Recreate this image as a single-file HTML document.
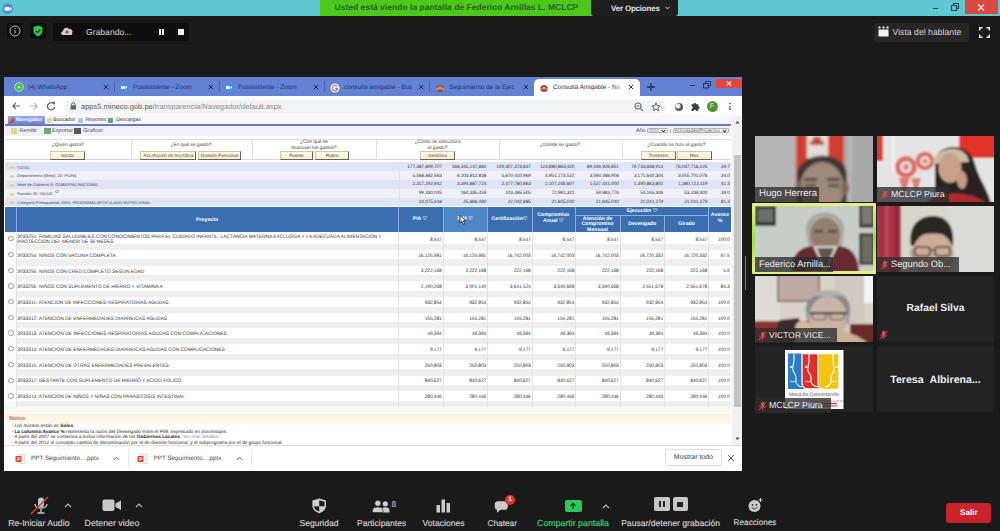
<!DOCTYPE html><html><head><meta charset="utf-8"><title>Zoom</title><style>
*{margin:0;padding:0;box-sizing:border-box}
html,body{text-rendering:geometricPrecision;width:1000px;height:531px;overflow:hidden;background:#1a1a1a;font-family:"Liberation Sans",sans-serif}
div,span{position:absolute}
.t{white-space:nowrap}
.tb{color:#cdcdcd;font-size:8.7px;white-space:nowrap;text-align:center;width:120px;margin-left:-60px}
.tile{background:#232323;overflow:hidden}
.nm{left:0;bottom:0;height:13px;background:rgba(38,38,38,.8);color:#f2f2f2;font-size:9.7px;line-height:13px;white-space:nowrap}
.q{color:#3a3a3a;font-size:4.9px;text-align:center;white-space:nowrap;line-height:6px}
.btn{background:linear-gradient(#fff8e4,#fbefd0);border:0.9px solid #cfc6ae;border-right-color:#6a6258;border-bottom-color:#6a6258;color:#444;font-size:4.65px;line-height:7.4px;text-align:center;white-space:nowrap}
.fr{left:5px;width:726px;height:8.6px}
.ft{color:#333;font-size:4.8px;line-height:8.6px;white-space:nowrap}
.num{color:#333;font-size:4.9px;white-space:nowrap;text-align:right;letter-spacing:-0.1px}
.hd{color:#fff;font-size:5.2px;font-weight:bold;text-align:center;white-space:nowrap;line-height:5.6px}
.pt{color:#333;font-size:4.9px;white-space:nowrap;line-height:5.7px}
.tab{color:#26346c;font-size:6.4px;white-space:nowrap;line-height:8px}
</style></head><body>
<div style="left:0;top:0;width:1000px;height:16px;background:#5ec7cf"></div>
<svg style="position:absolute;left:1.5px;top:2.5px" width="12" height="12"><circle cx="5.8" cy="5.8" r="5.4" fill="#4a8ee8"/><rect x="2.6" y="4" width="4.8" height="3.8" rx="0.8" fill="#fff"/><path d="M7.6 5.3L9.4 4.1V7.7L7.6 6.5Z" fill="#fff"/></svg>
<div style="left:320px;top:0;width:271px;height:16px;background:#4ec71c"></div>
<div class="t" style="left:334.5px;top:0.4px;height:16px;line-height:15px;font-size:8.55px;font-weight:bold;color:#1f641c">Usted está viendo la pantalla de Federico Arnillas L. MCLCP</div>
<div style="left:591px;top:0;width:87px;height:16px;background:#1f1f22;border-radius:0 0 3px 3px"></div>
<div class="t" style="left:611px;top:0.7px;line-height:15px;font-size:8px;font-weight:bold;color:#e2e2e2;letter-spacing:-0.2px">Ver Opciones</div>
<svg style="position:absolute;left:665px;top:6px" width="5" height="4"><path d="M0.5 0.8 L2.5 2.8 L4.5 0.8" stroke="#ddd" stroke-width="1" fill="none"/></svg>
<div style="left:933px;top:8px;width:5px;height:1.3px;background:#1c4a50"></div>
<svg style="position:absolute;left:950px;top:2px" width="10" height="10"><path d="M1.5 3.5h5v5h-5z M3.5 3.5v-2h5v5h-2" stroke="#1c4a50" stroke-width="1.1" fill="none"/></svg>
<div style="left:965px;top:0;width:32.5px;height:13.5px;background:#d9493e"></div>
<svg style="position:absolute;left:977px;top:3.5px" width="8" height="7"><path d="M1 0.5 L7 6.5 M7 0.5 L1 6.5" stroke="#fbe8e6" stroke-width="1.3"/></svg>
<div style="left:7px;top:23px;width:16px;height:16px;background:#0e0e0e;border-radius:2px"></div>
<svg style="position:absolute;left:9px;top:25px" width="12" height="12"><circle cx="6" cy="6" r="5" stroke="#bdbdbd" stroke-width="1" fill="none"/><rect x="5.5" y="5" width="1" height="3.6" fill="#bdbdbd"/><rect x="5.5" y="3.2" width="1" height="1" fill="#bdbdbd"/></svg>
<div style="left:30px;top:23px;width:16px;height:16px;background:#0e0e0e;border-radius:2px"></div>
<svg style="position:absolute;left:33px;top:25px" width="10" height="12"><path d="M5 0.5 L9.5 2 V6 C9.5 8.5 7.5 10.5 5 11.5 C2.5 10.5 0.5 8.5 0.5 6 V2 Z" fill="#33c24a"/><path d="M2.8 6 L4.4 7.6 L7.3 4.6" stroke="#0d3b17" stroke-width="1.2" fill="none"/></svg>
<div style="left:53px;top:22.5px;width:136px;height:18.5px;background:#0e0e0e;border-radius:2px"></div>
<svg style="position:absolute;left:60px;top:25px" width="14" height="12"><path d="M3 10 C0.5 10 0.5 6.5 3 6.3 C3 3 7 1.5 9 4 C11.5 3.5 13.5 6 12 8 C13 9.5 12 10 11 10 Z" fill="#d8c9cb"/><circle cx="7" cy="7" r="1.6" fill="#c43a3a"/></svg>
<div class="t" style="left:86px;top:25.5px;font-size:8.6px;line-height:12px;color:#d6d6d6">Grabando...</div>
<div style="left:158.5px;top:29px;width:2.2px;height:5.5px;background:#f0f0f0"></div>
<div style="left:162.3px;top:29px;width:2.2px;height:5.5px;background:#f0f0f0"></div>
<div style="left:178px;top:29px;width:6px;height:5.5px;background:#f0f0f0"></div>
<div style="left:874px;top:22.7px;width:95px;height:19px;background:#262626;border-radius:2px"></div>
<svg style="position:absolute;left:878px;top:26px" width="12" height="11"><rect x="0.5" y="3.5" width="10" height="7" fill="#f2f2f2"/><rect x="0.5" y="0.5" width="2" height="2" fill="#f2f2f2"/><rect x="4.5" y="0.5" width="2" height="2" fill="#f2f2f2"/><rect x="8.5" y="0.5" width="2" height="2" fill="#f2f2f2"/></svg>
<div class="t" style="left:892.5px;top:25.5px;font-size:8.7px;line-height:12px;color:#d8d8d8">Vista del hablante</div>
<svg style="position:absolute;left:979px;top:27px" width="11" height="11"><path d="M0.7 3.5V0.7H3.5 M7.5 0.7H10.3V3.5 M10.3 7.5V10.3H7.5 M3.5 10.3H0.7V7.5" stroke="#f0f0f0" stroke-width="1.4" fill="none"/></svg>
<div style="left:4px;top:77px;width:738px;height:394px;background:#fff;overflow:hidden"></div>
<div style="left:4px;top:77px;width:738px;height:19px;background:#6482d4"></div>
<svg style="position:absolute;left:14px;top:82px" width="10" height="10"><circle cx="5" cy="5" r="4.3" fill="#39c24c" stroke="#bfeac4" stroke-width="0.9"/><path d="M5 3.2L6.6 6.2H3.4Z" fill="#d8f5da"/></svg>
<div class="tab" style="left:28px;top:83.5px;width:69px;overflow:hidden">(4) WhatsApp</div>
<svg style="position:absolute;left:103px;top:83.5px" width="6" height="6"><path d="M0.8 0.8L5.2 5.2M5.2 0.8L0.8 5.2" stroke="#1f2b55" stroke-width="1"/></svg>
<div style="left:114px;top:81px;width:1px;height:11px;background:#4a5ea8"></div>
<svg style="position:absolute;left:119px;top:82.5px" width="10" height="9"><rect x="0.5" y="0.5" width="9" height="8" rx="2" fill="#4a8df0"/><rect x="2" y="3" width="4" height="3" rx="0.6" fill="#fff"/><path d="M6.3 4.5L8 3.2V5.8Z" fill="#fff"/></svg>
<div class="tab" style="left:133px;top:83.5px;width:69px;overflow:hidden">Posasistente - Zoom</div>
<svg style="position:absolute;left:208px;top:83.5px" width="6" height="6"><path d="M0.8 0.8L5.2 5.2M5.2 0.8L0.8 5.2" stroke="#1f2b55" stroke-width="1"/></svg>
<div style="left:219px;top:81px;width:1px;height:11px;background:#4a5ea8"></div>
<svg style="position:absolute;left:224px;top:82.5px" width="10" height="9"><rect x="0.5" y="0.5" width="9" height="8" rx="2" fill="#4a8df0"/><rect x="2" y="3" width="4" height="3" rx="0.6" fill="#fff"/><path d="M6.3 4.5L8 3.2V5.8Z" fill="#fff"/></svg>
<div class="tab" style="left:238px;top:83.5px;width:69px;overflow:hidden">Posasistente - Zoom</div>
<svg style="position:absolute;left:313px;top:83.5px" width="6" height="6"><path d="M0.8 0.8L5.2 5.2M5.2 0.8L0.8 5.2" stroke="#1f2b55" stroke-width="1"/></svg>
<div style="left:324px;top:81px;width:1px;height:11px;background:#4a5ea8"></div>
<svg style="position:absolute;left:330px;top:82.5px" width="10" height="10"><circle cx="5" cy="5" r="4.5" fill="#f6f6f6"/><path d="M7.3 3.6A2.7 2.7 0 1 0 7.6 5.4H5" stroke="#d9685a" stroke-width="1.1" fill="none"/><path d="M2.5 6.3A2.7 2.7 0 0 0 7.6 5.4" stroke="#5aa86a" stroke-width="1.1" fill="none"/></svg>
<div class="tab" style="left:344px;top:83.5px;width:68px;overflow:hidden">consulta amigable - Bus</div>
<svg style="position:absolute;left:418px;top:83.5px" width="6" height="6"><path d="M0.8 0.8L5.2 5.2M5.2 0.8L0.8 5.2" stroke="#1f2b55" stroke-width="1"/></svg>
<div style="left:429px;top:81px;width:1px;height:11px;background:#4a5ea8"></div>
<svg style="position:absolute;left:435px;top:82.5px" width="10" height="10"><path d="M1 6C1 3 3 2 5 2C7 2 9 3 9 6C9 8 7 9 5 9C3 9 1 8 1 6Z" fill="#a8483a"/><circle cx="5" cy="5" r="1.6" fill="#e0a080"/><path d="M1 6.5L3 5.8M9 6.5L7 5.8" stroke="#f0d0d0" stroke-width="1"/></svg>
<div class="tab" style="left:449px;top:83.5px;width:68px;overflow:hidden">Seguimiento de la Ejec</div>
<svg style="position:absolute;left:523px;top:83.5px" width="6" height="6"><path d="M0.8 0.8L5.2 5.2M5.2 0.8L0.8 5.2" stroke="#1f2b55" stroke-width="1"/></svg>
<div style="left:534px;top:78.5px;width:106px;height:18px;background:#fff;border-radius:5px 5px 0 0"></div>
<svg style="position:absolute;left:539px;top:82.5px" width="10" height="10"><path d="M1 6C1 3 3 2 5 2C7 2 9 3 9 6C9 8 7 9 5 9C3 9 1 8 1 6Z" fill="#a8483a"/><circle cx="5" cy="5" r="1.6" fill="#e0a080"/><path d="M1 6.5L3 5.8M9 6.5L7 5.8" stroke="#f0d0d0" stroke-width="1"/></svg>
<div class="tab" style="left:553px;top:83.5px;width:70px;overflow:hidden;color:#333">Consulta Amigable - Na</div>
<div style="left:613px;top:82px;width:12px;height:10px;background:linear-gradient(90deg,rgba(255,255,255,0),#fff)"></div>
<svg style="position:absolute;left:628px;top:83.5px" width="6" height="6"><path d="M0.8 0.8L5.2 5.2M5.2 0.8L0.8 5.2" stroke="#333" stroke-width="1"/></svg>
<svg style="position:absolute;left:646px;top:82px" width="10" height="10"><path d="M5 1V9M1 5H9" stroke="#1f2b55" stroke-width="1.3"/></svg>
<div style="left:689.5px;top:84.5px;width:5px;height:1.3px;background:#24336a"></div>
<svg style="position:absolute;left:702px;top:79.5px" width="10" height="9"><path d="M1.5 3.5h5v4.5h-5z M3.5 3.5v-2h5v4.5h-2" stroke="#24336a" stroke-width="1" fill="none"/></svg>
<div style="left:716px;top:78.5px;width:25.5px;height:9px;background:#e0473f"></div>
<svg style="position:absolute;left:725.5px;top:80.5px" width="6" height="5"><path d="M0.8 0.5L5.2 4.5M5.2 0.5L0.8 4.5" stroke="#fde" stroke-width="1.1"/></svg>
<svg style="position:absolute;left:11px;top:101px" width="10" height="10"><path d="M9 5H2 M5 1.8L1.8 5L5 8.2" stroke="#5f6368" stroke-width="1.2" fill="none"/></svg>
<svg style="position:absolute;left:28.5px;top:101px" width="10" height="10"><path d="M1 5H8 M5 1.8L8.2 5L5 8.2" stroke="#b7b9bc" stroke-width="1.2" fill="none"/></svg>
<svg style="position:absolute;left:46px;top:101px" width="10" height="10"><path d="M8 3.2 A3.6 3.6 0 1 0 8.6 6" stroke="#5f6368" stroke-width="1.3" fill="none"/><path d="M6 0.8 L9 0.8 L9 3.8 Z" fill="#5f6368"/></svg>
<div style="left:63.5px;top:100px;width:602px;height:13.5px;background:#f1f3f4;border-radius:7px"></div>
<svg style="position:absolute;left:69.5px;top:102px" width="7" height="8"><rect x="0.5" y="3.3" width="5.5" height="4.2" fill="#5f6368"/><path d="M1.6 3.5V2.3A1.7 1.7 0 0 1 5 2.3V3.5" stroke="#5f6368" stroke-width="1" fill="none"/></svg>
<div class="t" style="left:81px;top:101px;font-size:7.5px;line-height:11px;color:#5a5a5a">apps5.mineco.gob.pe<span style="position:static;color:#8a8d91">/transparencia/Navegador/default.aspx</span></div>
<svg style="position:absolute;left:634px;top:102px" width="10" height="10"><circle cx="4" cy="4" r="3" stroke="#6a6d71" stroke-width="1.1" fill="none"/><path d="M6.2 6.2L9 9 M2.5 4H5.5" stroke="#6a6d71" stroke-width="1.1"/></svg>
<svg style="position:absolute;left:651px;top:101.5px" width="10" height="10"><path d="M5 0.8L6.2 3.7L9.2 3.9L6.9 5.8L7.6 8.8L5 7.2L2.4 8.8L3.1 5.8L0.8 3.9L3.8 3.7Z" stroke="#5f6368" stroke-width="1" fill="none"/></svg>
<svg style="position:absolute;left:674px;top:101.5px" width="10" height="10"><circle cx="5" cy="5" r="4" fill="#555"/><circle cx="4" cy="4" r="2.6" fill="#e8e8e8"/></svg>
<svg style="position:absolute;left:690px;top:101px" width="11" height="11"><path d="M1.5 3.2H3.6A1.3 1.3 0 0 1 6.2 3.2H8.3V5.3A1.3 1.3 0 0 1 8.3 7.9V10H6.2A1.3 1.3 0 0 0 3.6 10H1.5V7.9A1.3 1.3 0 0 0 1.5 5.3Z" fill="#3c4043"/></svg>
<div style="left:706.5px;top:100.5px;width:11px;height:11px;border-radius:50%;background:#54962e"></div>
<div class="t" style="left:706.5px;top:100.5px;width:11px;text-align:center;font-size:7px;line-height:11px;color:#e8f5e0">F</div>
<div style="left:729.3px;top:102.8px;width:1.5px;height:1.5px;background:#5f6368;border-radius:50%"></div>
<div style="left:729.3px;top:105.5px;width:1.5px;height:1.5px;background:#5f6368;border-radius:50%"></div>
<div style="left:729.3px;top:108.2px;width:1.5px;height:1.5px;background:#5f6368;border-radius:50%"></div>
<div style="left:5px;top:115px;width:727px;height:9px;background:#f7f7fb"></div>
<div style="left:7.5px;top:116px;width:37px;height:8.5px;background:linear-gradient(#93a6e8,#6a80d2);border-radius:1px 1px 0 0"></div>
<div style="left:9px;top:117.5px;width:5px;height:5px;background:linear-gradient(135deg,#e8c040,#d04040 60%,#40a040)"></div>
<div class="t" style="left:16px;top:116px;font-size:5px;line-height:8px;color:#fff;font-weight:bold">Navegador</div>
<div style="left:46.5px;top:117.5px;width:5px;height:5.5px;background:#e6c96a;opacity:.8;border-radius:1px"></div>
<div class="t" style="left:53.2px;top:116.3px;font-size:5.2px;line-height:8px;color:#333">Buscador</div>
<div style="left:78px;top:117.5px;width:5px;height:5.5px;background:#a8b4d0;opacity:.8;border-radius:1px"></div>
<div class="t" style="left:85.5px;top:116.3px;font-size:5.2px;line-height:8px;color:#333">Reportes</div>
<div style="left:108.2px;top:117.5px;width:5px;height:5.5px;background:#3a8a6a;opacity:.8;border-radius:1px"></div>
<div class="t" style="left:116.2px;top:116.3px;font-size:5.2px;line-height:8px;color:#333">Descargas</div>
<div style="left:5px;top:124.4px;width:726px;height:2px;background:#6a78c6"></div>
<div style="left:5px;top:126.4px;width:726px;height:9.6px;background:#eef0fb"></div>
<div style="left:11.2px;top:128.3px;width:5.5px;height:5.5px;background:#e8cf6a;opacity:.85"></div>
<div class="t" style="left:19.5px;top:127.3px;font-size:5.6px;line-height:8px;color:#555">Remitir</div>
<div style="left:44.2px;top:128.3px;width:7px;height:5.5px;background:#5a9a5a;opacity:.85"></div>
<div class="t" style="left:52px;top:127.3px;font-size:5.6px;line-height:8px;color:#555">Exportar</div>
<div style="left:73.5px;top:128.3px;width:7px;height:5.5px;background:#4a3a2a;opacity:.85"></div>
<div class="t" style="left:83.2px;top:127.3px;font-size:5.6px;line-height:8px;color:#555">Graficar</div>
<div class="t" style="left:636px;top:126.8px;font-size:5.3px;line-height:8px;color:#444">Año</div>
<div style="left:646.8px;top:127.6px;width:21.2px;height:5.6px;background:#fff;border:0.6px solid #b4b4b4;border-radius:1px"></div>
<div class="t" style="left:648.5px;top:128px;font-size:4.6px;line-height:6px;color:#777">2020</div>
<svg style="position:absolute;left:660.5px;top:128.8px" width="5" height="4"><path d="M0.6 0.8L2.5 2.8L4.4 0.8" stroke="#333" stroke-width="1.1" fill="none"/></svg>
<div style="left:670.3px;top:128.5px;width:0.6px;height:4px;background:#bbb"></div>
<div style="left:672.5px;top:127.6px;width:56.8px;height:5.6px;background:#fff;border:0.6px solid #b4b4b4;border-radius:1px"></div>
<div class="t" style="left:674.5px;top:128px;font-size:4.6px;line-height:6px;color:#555">Actividades/Proyectos</div>
<svg style="position:absolute;left:722.3px;top:128.8px" width="5" height="4"><path d="M0.6 0.8L2.5 2.8L4.4 0.8" stroke="#333" stroke-width="1.1" fill="none"/></svg>
<div style="left:732px;top:115px;width:10px;height:329.5px;background:#f1f1f1"></div>
<svg style="position:absolute;left:734.5px;top:119.5px" width="5" height="4"><path d="M0.5 3.5L2.5 0.8L4.5 3.5Z" fill="#555"/></svg>
<svg style="position:absolute;left:734.5px;top:437px" width="5" height="4"><path d="M0.5 0.5L2.5 3.2L4.5 0.5Z" fill="#555"/></svg>
<div style="left:733.5px;top:155px;width:7px;height:252px;background:#c3c3c3"></div>
<div style="left:5px;top:139.4px;width:726px;height:21px;background:#fff;border-top:0.8px solid #dcdcdc;border-bottom:0.8px solid #d6d6d6"></div>
<div style="left:130.6px;top:140px;width:0.8px;height:20px;background:#e0e0e0"></div>
<div style="left:251.6px;top:140px;width:0.8px;height:20px;background:#e0e0e0"></div>
<div style="left:376.3px;top:140px;width:0.8px;height:20px;background:#e0e0e0"></div>
<div style="left:499px;top:140px;width:0.8px;height:20px;background:#e0e0e0"></div>
<div style="left:621.75px;top:140px;width:0.8px;height:20px;background:#e0e0e0"></div>
<div class="q" style="left:7.799999999999997px;top:143.3px;width:120px">¿Quién gasta?</div>
<div class="q" style="left:131.0px;top:143.3px;width:120px">¿En qué se gastó?</div>
<div class="q" style="left:254.0px;top:139.8px;width:120px">¿Con qué se<br>financian los gastos?</div>
<div class="q" style="left:377.6px;top:139.8px;width:120px">¿Cómo se estructura<br>el gasto?</div>
<div class="q" style="left:500.0px;top:143.3px;width:120px">¿Dónde se gastó?</div>
<div class="q" style="left:616.4px;top:143.3px;width:120px">¿Cuándo se hizo el gasto?</div>
<div class="btn" style="left:50px;top:150.6px;width:35px;height:9.2px">Sector</div>
<div class="btn" style="left:140.4px;top:150.6px;width:56.099999999999994px;height:9.2px">Act./Acción de Inv./Obra</div>
<div class="btn" style="left:198px;top:150.6px;width:43.30000000000001px;height:9.2px">División Funcional</div>
<div class="btn" style="left:279.7px;top:150.6px;width:33.60000000000002px;height:9.2px">Fuente</div>
<div class="btn" style="left:315.2px;top:150.6px;width:33.900000000000034px;height:9.2px">Rubro</div>
<div class="btn" style="left:420px;top:150.6px;width:35px;height:9.2px">Genérica</div>
<div class="btn" style="left:641px;top:150.6px;width:34.75px;height:9.2px">Trimestre</div>
<div class="btn" style="left:676.5px;top:150.6px;width:35.25px;height:9.2px">Mes</div>
<div style="left:5px;top:162.40px;width:726px;height:8.8px;background:#dfe5f7"></div>
<svg style="position:absolute;left:8.5px;top:164.20px" width="6" height="5"><path d="M0.3 4.6 C0.8 1 5.2 1 5.7 4.6 Z" fill="#e2cf6e"/></svg>
<div class="t" style="left:17.3px;top:163.60px;font-size:4px;line-height:8.8px;color:#444">TOTAL</div>
<div class="num" style="left:381.8px;width:60px;top:163.80px;font-size:4.8px;line-height:8.8px">177,387,899,707</div>
<div class="num" style="left:426.3px;width:60px;top:163.80px;font-size:4.8px;line-height:8.8px">168,345,247,882</div>
<div class="num" style="left:470.8px;width:60px;top:163.80px;font-size:4.8px;line-height:8.8px">149,307,373,837</div>
<div class="num" style="left:514.4px;width:60px;top:163.80px;font-size:4.8px;line-height:8.8px">123,880,883,420</div>
<div class="num" style="left:558.8px;width:60px;top:163.80px;font-size:4.8px;line-height:8.8px">89,446,926,851</div>
<div class="num" style="left:603.2px;width:60px;top:163.80px;font-size:4.8px;line-height:8.8px">79,733,838,913</div>
<div class="num" style="left:647.3px;width:60px;top:163.80px;font-size:4.8px;line-height:8.8px">76,037,718,225</div>
<div class="num" style="left:669.8px;width:60px;top:163.80px;font-size:4.8px;line-height:8.8px">39.7</div>
<div style="left:5px;top:171.20px;width:726px;height:8.8px;background:#eff0f8"></div>
<svg style="position:absolute;left:8.5px;top:173.00px" width="6" height="5"><path d="M0.3 4.6 C0.8 1 5.2 1 5.7 4.6 Z" fill="#e2cf6e"/></svg>
<div class="t" style="left:17.3px;top:172.40px;font-size:4px;line-height:8.8px;color:#444">Departamento (Meta): 20: PIURA</div>
<div class="num" style="left:381.8px;width:60px;top:172.60px;font-size:4.8px;line-height:8.8px">5,568,882,563</div>
<div class="num" style="left:426.3px;width:60px;top:172.60px;font-size:4.8px;line-height:8.8px">6,103,812,838</div>
<div class="num" style="left:470.8px;width:60px;top:172.60px;font-size:4.8px;line-height:8.8px">5,670,410,969</div>
<div class="num" style="left:514.4px;width:60px;top:172.60px;font-size:4.8px;line-height:8.8px">4,951,173,522</div>
<div class="num" style="left:558.8px;width:60px;top:172.60px;font-size:4.8px;line-height:8.8px">3,594,488,908</div>
<div class="num" style="left:603.2px;width:60px;top:172.60px;font-size:4.8px;line-height:8.8px">3,171,640,304</div>
<div class="num" style="left:647.3px;width:60px;top:172.60px;font-size:4.8px;line-height:8.8px">3,055,701,076</div>
<div class="num" style="left:669.8px;width:60px;top:172.60px;font-size:4.8px;line-height:8.8px">34.0</div>
<div style="left:5px;top:180.00px;width:726px;height:8.8px;background:#dfe5f7"></div>
<svg style="position:absolute;left:8.5px;top:181.80px" width="6" height="5"><path d="M0.3 4.6 C0.8 1 5.2 1 5.7 4.6 Z" fill="#e2cf6e"/></svg>
<div class="t" style="left:17.3px;top:181.20px;font-size:4px;line-height:8.8px;color:#444">Nivel de Gobierno E: GOBIERNO NACIONAL</div>
<div class="num" style="left:381.8px;width:60px;top:181.40px;font-size:4.8px;line-height:8.8px">2,317,292,942</div>
<div class="num" style="left:426.3px;width:60px;top:181.40px;font-size:4.8px;line-height:8.8px">3,394,887,724</div>
<div class="num" style="left:470.8px;width:60px;top:181.40px;font-size:4.8px;line-height:8.8px">2,477,780,863</div>
<div class="num" style="left:514.4px;width:60px;top:181.40px;font-size:4.8px;line-height:8.8px">2,107,246,607</div>
<div class="num" style="left:558.8px;width:60px;top:181.40px;font-size:4.8px;line-height:8.8px">1,527,441,000</div>
<div class="num" style="left:603.2px;width:60px;top:181.40px;font-size:4.8px;line-height:8.8px">1,390,863,802</div>
<div class="num" style="left:647.3px;width:60px;top:181.40px;font-size:4.8px;line-height:8.8px">1,380,722,119</div>
<div class="num" style="left:669.8px;width:60px;top:181.40px;font-size:4.8px;line-height:8.8px">41.4</div>
<div style="left:5px;top:188.80px;width:726px;height:8.8px;background:#eff0f8"></div>
<svg style="position:absolute;left:8.5px;top:190.60px" width="6" height="5"><path d="M0.3 4.6 C0.8 1 5.2 1 5.7 4.6 Z" fill="#e2cf6e"/></svg>
<div class="t" style="left:17.3px;top:190.00px;font-size:4px;line-height:8.8px;color:#444">Funcion 20: SALUD</div>
<div class="num" style="left:381.8px;width:60px;top:190.20px;font-size:4.8px;line-height:8.8px">99,330,045</div>
<div class="num" style="left:426.3px;width:60px;top:190.20px;font-size:4.8px;line-height:8.8px">164,335,459</div>
<div class="num" style="left:470.8px;width:60px;top:190.20px;font-size:4.8px;line-height:8.8px">103,485,505</div>
<div class="num" style="left:514.4px;width:60px;top:190.20px;font-size:4.8px;line-height:8.8px">72,981,321</div>
<div class="num" style="left:558.8px;width:60px;top:190.20px;font-size:4.8px;line-height:8.8px">59,883,776</div>
<div class="num" style="left:603.2px;width:60px;top:190.20px;font-size:4.8px;line-height:8.8px">54,165,346</div>
<div class="num" style="left:647.3px;width:60px;top:190.20px;font-size:4.8px;line-height:8.8px">53,239,300</div>
<div class="num" style="left:669.8px;width:60px;top:190.20px;font-size:4.8px;line-height:8.8px">39.0</div>
<div style="left:5px;top:197.60px;width:726px;height:8.8px;background:#dfe5f7"></div>
<svg style="position:absolute;left:8.5px;top:199.40px" width="6" height="5"><path d="M0.3 4.6 C0.8 1 5.2 1 5.7 4.6 Z" fill="#e2cf6e"/></svg>
<div class="t" style="left:17.3px;top:198.80px;font-size:4px;line-height:8.8px;color:#444">Categoria Presupuestal: 0001: PROGRAMA ARTICULADO NUTRICIONAL</div>
<div class="num" style="left:381.8px;width:60px;top:199.00px;font-size:4.8px;line-height:8.8px">24,075,618</div>
<div class="num" style="left:426.3px;width:60px;top:199.00px;font-size:4.8px;line-height:8.8px">25,866,490</div>
<div class="num" style="left:470.8px;width:60px;top:199.00px;font-size:4.8px;line-height:8.8px">22,042,885</div>
<div class="num" style="left:514.4px;width:60px;top:199.00px;font-size:4.8px;line-height:8.8px">21,845,040</div>
<div class="num" style="left:558.8px;width:60px;top:199.00px;font-size:4.8px;line-height:8.8px">21,845,040</div>
<div class="num" style="left:603.2px;width:60px;top:199.00px;font-size:4.8px;line-height:8.8px">21,041,279</div>
<div class="num" style="left:647.3px;width:60px;top:199.00px;font-size:4.8px;line-height:8.8px">21,041,279</div>
<div class="num" style="left:669.8px;width:60px;top:199.00px;font-size:4.8px;line-height:8.8px">81.3</div>
<div style="left:398.5px;top:162.4px;width:0.6px;height:44px;background:#d8dcea"></div>
<div style="left:54.5px;top:189.5px;width:4px;height:3.5px;border:0.6px solid #aaa;border-radius:50%"></div>
<div style="left:5px;top:206.6px;width:726px;height:25.9px;background:#3a6eb0"></div>
<div style="left:443px;top:206.6px;width:44.5px;height:25.9px;background:#4f87c6"></div>
<div style="left:16.1px;top:206.6px;width:0.8px;height:25.900000000000006px;background:#8fb0d8"></div>
<div style="left:398.1px;top:206.6px;width:0.8px;height:25.900000000000006px;background:#8fb0d8"></div>
<div style="left:442.6px;top:206.6px;width:0.8px;height:25.900000000000006px;background:#8fb0d8"></div>
<div style="left:487.1px;top:206.6px;width:0.8px;height:25.900000000000006px;background:#8fb0d8"></div>
<div style="left:531.6px;top:206.6px;width:0.8px;height:25.900000000000006px;background:#8fb0d8"></div>
<div style="left:575.2px;top:206.6px;width:0.8px;height:25.900000000000006px;background:#8fb0d8"></div>
<div style="left:619.6px;top:215.4px;width:0.8px;height:17.099999999999994px;background:#8fb0d8"></div>
<div style="left:664.0px;top:215.4px;width:0.8px;height:17.099999999999994px;background:#8fb0d8"></div>
<div style="left:708.1px;top:206.6px;width:0.8px;height:25.900000000000006px;background:#8fb0d8"></div>
<div style="left:575.6px;top:215px;width:133px;height:0.8px;background:#8fb0d8"></div>
<div class="hd" style="left:157.0px;top:217.8px;width:100px">Proyecto</div>
<div class="hd" style="left:390.0px;top:216.5px;width:60px">PIA &#9825;</div>
<div class="hd" style="left:435.0px;top:216.5px;width:60px">PIM &#9825;</div>
<div class="hd" style="left:479.5px;top:216.5px;width:60px">Certificación&#9825;</div>
<div class="hd" style="left:523.3px;top:213.3px;width:60px">Compromiso<br>Anual &#9825;</div>
<div class="hd" style="left:612.0px;top:208.6px;width:60px">Ejecución &#9825;</div>
<div class="hd" style="left:567.5px;top:216.6px;width:60px">Atención de<br>Compromiso<br>Mensual</div>
<div class="hd" style="left:612.2px;top:221.5px;width:60px">Devengado</div>
<div class="hd" style="left:656.5px;top:221.5px;width:60px">Girado</div>
<div class="hd" style="left:709.0px;top:213.3px;width:22px">Avance<br>%</div>
<svg style="position:absolute;left:459px;top:215px" width="8" height="10"><path d="M1 0.5 L1 8 L3 6.3 L4.5 9.3 L5.8 8.7 L4.4 5.8 L7 5.8 Z" fill="#fff" stroke="#222" stroke-width="0.8"/></svg>
<div style="left:5px;top:232.5px;width:726px;height:173.9px;background:#efefef"></div>
<div style="left:5px;top:232.5px;width:11.5px;height:173.9px;background:#fafafa"></div>
<div style="left:16.5px;top:232.50px;width:714.5px;height:11.3px;background:#fff"></div>
<div style="left:8.4px;top:235.90px;width:5.4px;height:5.4px;border:0.7px solid #9a9a9a;border-radius:50%;background:#fff"></div>
<div class="pt" style="left:17.3px;top:234.6px">3033251: FAMILIAS SALUDABLES CON CONOCIMIENTOS PARA EL CUIDADO INFANTIL, LACTANCIA MATERNA EXCLUSIVA Y LA ADECUADA ALIMENTACION Y<br>PROTECCION DEL MENOR DE 36 MESES</div>
<div class="num" style="left:381.7px;width:60px;top:237.70px;line-height:5.7px">8,547</div>
<div class="num" style="left:426.2px;width:60px;top:237.70px;line-height:5.7px">8,547</div>
<div class="num" style="left:470.7px;width:60px;top:237.70px;line-height:5.7px">8,547</div>
<div class="num" style="left:514.3px;width:60px;top:237.70px;line-height:5.7px">8,547</div>
<div class="num" style="left:558.7px;width:60px;top:237.70px;line-height:5.7px">8,547</div>
<div class="num" style="left:603.1px;width:60px;top:237.70px;line-height:5.7px">8,547</div>
<div class="num" style="left:647.2px;width:60px;top:237.70px;line-height:5.7px">8,547</div>
<div class="num" style="left:669.7px;width:60px;top:237.70px;line-height:5.7px">100.0</div>
<div style="left:16.5px;top:249.95px;width:714.5px;height:9.5px;background:#fff"></div>
<div style="left:8.4px;top:251.90px;width:5.4px;height:5.4px;border:0.7px solid #9a9a9a;border-radius:50%;background:#fff"></div>
<div class="pt" style="left:17.3px;top:253.80px">3033254: NIÑOS CON VACUNA COMPLETA</div>
<div class="num" style="left:381.7px;width:60px;top:253.70px;line-height:5.7px">16,125,981</div>
<div class="num" style="left:426.2px;width:60px;top:253.70px;line-height:5.7px">16,125,981</div>
<div class="num" style="left:470.7px;width:60px;top:253.70px;line-height:5.7px">16,742,003</div>
<div class="num" style="left:514.3px;width:60px;top:253.70px;line-height:5.7px">16,742,003</div>
<div class="num" style="left:558.7px;width:60px;top:253.70px;line-height:5.7px">16,742,003</div>
<div class="num" style="left:603.1px;width:60px;top:253.70px;line-height:5.7px">16,720,332</div>
<div class="num" style="left:647.2px;width:60px;top:253.70px;line-height:5.7px">16,720,332</div>
<div class="num" style="left:669.7px;width:60px;top:253.70px;line-height:5.7px">97.5</div>
<div style="left:16.5px;top:265.65px;width:714.5px;height:9.5px;background:#fff"></div>
<div style="left:8.4px;top:267.60px;width:5.4px;height:5.4px;border:0.7px solid #9a9a9a;border-radius:50%;background:#fff"></div>
<div class="pt" style="left:17.3px;top:269.50px">3033255: NIÑOS CON CRED COMPLETO SEGUN EDAD</div>
<div class="num" style="left:381.7px;width:60px;top:269.40px;line-height:5.7px">3,222,168</div>
<div class="num" style="left:426.2px;width:60px;top:269.40px;line-height:5.7px">3,222,168</div>
<div class="num" style="left:470.7px;width:60px;top:269.40px;line-height:5.7px">222,168</div>
<div class="num" style="left:514.3px;width:60px;top:269.40px;line-height:5.7px">222,168</div>
<div class="num" style="left:558.7px;width:60px;top:269.40px;line-height:5.7px">222,168</div>
<div class="num" style="left:603.1px;width:60px;top:269.40px;line-height:5.7px">222,168</div>
<div class="num" style="left:647.2px;width:60px;top:269.40px;line-height:5.7px">222,168</div>
<div class="num" style="left:669.7px;width:60px;top:269.40px;line-height:5.7px">5.9</div>
<div style="left:16.5px;top:281.35px;width:714.5px;height:9.5px;background:#fff"></div>
<div style="left:8.4px;top:283.30px;width:5.4px;height:5.4px;border:0.7px solid #9a9a9a;border-radius:50%;background:#fff"></div>
<div class="pt" style="left:17.3px;top:285.20px">3033256: NIÑOS CON SUPLEMENTO DE HIERRO Y VITAMINA A</div>
<div class="num" style="left:381.7px;width:60px;top:285.10px;line-height:5.7px">2,190,268</div>
<div class="num" style="left:426.2px;width:60px;top:285.10px;line-height:5.7px">3,001,140</div>
<div class="num" style="left:470.7px;width:60px;top:285.10px;line-height:5.7px">3,641,524</div>
<div class="num" style="left:514.3px;width:60px;top:285.10px;line-height:5.7px">3,340,668</div>
<div class="num" style="left:558.7px;width:60px;top:285.10px;line-height:5.7px">3,340,668</div>
<div class="num" style="left:603.1px;width:60px;top:285.10px;line-height:5.7px">2,551,678</div>
<div class="num" style="left:647.2px;width:60px;top:285.10px;line-height:5.7px">2,551,678</div>
<div class="num" style="left:669.7px;width:60px;top:285.10px;line-height:5.7px">84.3</div>
<div style="left:16.5px;top:297.05px;width:714.5px;height:9.5px;background:#fff"></div>
<div style="left:8.4px;top:299.00px;width:5.4px;height:5.4px;border:0.7px solid #9a9a9a;border-radius:50%;background:#fff"></div>
<div class="pt" style="left:17.3px;top:300.90px">3033311: ATENCION DE INFECCIONES RESPIRATORIAS AGUDAS</div>
<div class="num" style="left:381.7px;width:60px;top:300.80px;line-height:5.7px">932,854</div>
<div class="num" style="left:426.2px;width:60px;top:300.80px;line-height:5.7px">932,854</div>
<div class="num" style="left:470.7px;width:60px;top:300.80px;line-height:5.7px">932,854</div>
<div class="num" style="left:514.3px;width:60px;top:300.80px;line-height:5.7px">932,854</div>
<div class="num" style="left:558.7px;width:60px;top:300.80px;line-height:5.7px">932,854</div>
<div class="num" style="left:603.1px;width:60px;top:300.80px;line-height:5.7px">932,854</div>
<div class="num" style="left:647.2px;width:60px;top:300.80px;line-height:5.7px">932,854</div>
<div class="num" style="left:669.7px;width:60px;top:300.80px;line-height:5.7px">100.0</div>
<div style="left:16.5px;top:312.75px;width:714.5px;height:9.5px;background:#fff"></div>
<div style="left:8.4px;top:314.70px;width:5.4px;height:5.4px;border:0.7px solid #9a9a9a;border-radius:50%;background:#fff"></div>
<div class="pt" style="left:17.3px;top:316.60px">3033312: ATENCION DE ENFERMEDADES DIARREICAS AGUDAS</div>
<div class="num" style="left:381.7px;width:60px;top:316.50px;line-height:5.7px">155,281</div>
<div class="num" style="left:426.2px;width:60px;top:316.50px;line-height:5.7px">155,281</div>
<div class="num" style="left:470.7px;width:60px;top:316.50px;line-height:5.7px">155,281</div>
<div class="num" style="left:514.3px;width:60px;top:316.50px;line-height:5.7px">155,281</div>
<div class="num" style="left:558.7px;width:60px;top:316.50px;line-height:5.7px">155,281</div>
<div class="num" style="left:603.1px;width:60px;top:316.50px;line-height:5.7px">155,281</div>
<div class="num" style="left:647.2px;width:60px;top:316.50px;line-height:5.7px">155,281</div>
<div class="num" style="left:669.7px;width:60px;top:316.50px;line-height:5.7px">100.0</div>
<div style="left:16.5px;top:328.45px;width:714.5px;height:9.5px;background:#fff"></div>
<div style="left:8.4px;top:330.40px;width:5.4px;height:5.4px;border:0.7px solid #9a9a9a;border-radius:50%;background:#fff"></div>
<div class="pt" style="left:17.3px;top:332.30px">3033313: ATENCION DE INFECCIONES RESPIRATORIAS AGUDAS CON COMPLICACIONES</div>
<div class="num" style="left:381.7px;width:60px;top:332.20px;line-height:5.7px">49,394</div>
<div class="num" style="left:426.2px;width:60px;top:332.20px;line-height:5.7px">49,394</div>
<div class="num" style="left:470.7px;width:60px;top:332.20px;line-height:5.7px">49,394</div>
<div class="num" style="left:514.3px;width:60px;top:332.20px;line-height:5.7px">49,394</div>
<div class="num" style="left:558.7px;width:60px;top:332.20px;line-height:5.7px">49,394</div>
<div class="num" style="left:603.1px;width:60px;top:332.20px;line-height:5.7px">49,394</div>
<div class="num" style="left:647.2px;width:60px;top:332.20px;line-height:5.7px">49,394</div>
<div class="num" style="left:669.7px;width:60px;top:332.20px;line-height:5.7px">100.0</div>
<div style="left:16.5px;top:344.15px;width:714.5px;height:9.5px;background:#fff"></div>
<div style="left:8.4px;top:346.10px;width:5.4px;height:5.4px;border:0.7px solid #9a9a9a;border-radius:50%;background:#fff"></div>
<div class="pt" style="left:17.3px;top:348.00px">3033314: ATENCION DE ENFERMEDADES DIARREICAS AGUDAS CON COMPLICACIONES</div>
<div class="num" style="left:381.7px;width:60px;top:347.90px;line-height:5.7px">9,177</div>
<div class="num" style="left:426.2px;width:60px;top:347.90px;line-height:5.7px">9,177</div>
<div class="num" style="left:470.7px;width:60px;top:347.90px;line-height:5.7px">9,177</div>
<div class="num" style="left:514.3px;width:60px;top:347.90px;line-height:5.7px">9,177</div>
<div class="num" style="left:558.7px;width:60px;top:347.90px;line-height:5.7px">9,177</div>
<div class="num" style="left:603.1px;width:60px;top:347.90px;line-height:5.7px">9,177</div>
<div class="num" style="left:647.2px;width:60px;top:347.90px;line-height:5.7px">9,177</div>
<div class="num" style="left:669.7px;width:60px;top:347.90px;line-height:5.7px">100.0</div>
<div style="left:16.5px;top:359.85px;width:714.5px;height:9.5px;background:#fff"></div>
<div style="left:8.4px;top:361.80px;width:5.4px;height:5.4px;border:0.7px solid #9a9a9a;border-radius:50%;background:#fff"></div>
<div class="pt" style="left:17.3px;top:363.70px">3033315: ATENCION DE OTRAS ENFERMEDADES PREVALENTES</div>
<div class="num" style="left:381.7px;width:60px;top:363.60px;line-height:5.7px">250,803</div>
<div class="num" style="left:426.2px;width:60px;top:363.60px;line-height:5.7px">250,803</div>
<div class="num" style="left:470.7px;width:60px;top:363.60px;line-height:5.7px">250,803</div>
<div class="num" style="left:514.3px;width:60px;top:363.60px;line-height:5.7px">250,803</div>
<div class="num" style="left:558.7px;width:60px;top:363.60px;line-height:5.7px">250,803</div>
<div class="num" style="left:603.1px;width:60px;top:363.60px;line-height:5.7px">250,803</div>
<div class="num" style="left:647.2px;width:60px;top:363.60px;line-height:5.7px">250,803</div>
<div class="num" style="left:669.7px;width:60px;top:363.60px;line-height:5.7px">100.0</div>
<div style="left:16.5px;top:375.55px;width:714.5px;height:9.5px;background:#fff"></div>
<div style="left:8.4px;top:377.50px;width:5.4px;height:5.4px;border:0.7px solid #9a9a9a;border-radius:50%;background:#fff"></div>
<div class="pt" style="left:17.3px;top:379.40px">3033317: GESTANTE CON SUPLEMENTO DE HIERRO Y ACIDO FOLICO</div>
<div class="num" style="left:381.7px;width:60px;top:379.30px;line-height:5.7px">840,627</div>
<div class="num" style="left:426.2px;width:60px;top:379.30px;line-height:5.7px">840,627</div>
<div class="num" style="left:470.7px;width:60px;top:379.30px;line-height:5.7px">840,627</div>
<div class="num" style="left:514.3px;width:60px;top:379.30px;line-height:5.7px">840,627</div>
<div class="num" style="left:558.7px;width:60px;top:379.30px;line-height:5.7px">840,627</div>
<div class="num" style="left:603.1px;width:60px;top:379.30px;line-height:5.7px">840,627</div>
<div class="num" style="left:647.2px;width:60px;top:379.30px;line-height:5.7px">840,627</div>
<div class="num" style="left:669.7px;width:60px;top:379.30px;line-height:5.7px">100.0</div>
<div style="left:16.5px;top:391.25px;width:714.5px;height:9.5px;background:#fff"></div>
<div style="left:8.4px;top:393.20px;width:5.4px;height:5.4px;border:0.7px solid #9a9a9a;border-radius:50%;background:#fff"></div>
<div class="pt" style="left:17.3px;top:395.10px">3033414: ATENCION DE NIÑOS Y NIÑAS CON PARASITOSIS INTESTINAL</div>
<div class="num" style="left:381.7px;width:60px;top:395.00px;line-height:5.7px">280,446</div>
<div class="num" style="left:426.2px;width:60px;top:395.00px;line-height:5.7px">280,446</div>
<div class="num" style="left:470.7px;width:60px;top:395.00px;line-height:5.7px">280,446</div>
<div class="num" style="left:514.3px;width:60px;top:395.00px;line-height:5.7px">280,446</div>
<div class="num" style="left:558.7px;width:60px;top:395.00px;line-height:5.7px">280,446</div>
<div class="num" style="left:603.1px;width:60px;top:395.00px;line-height:5.7px">280,446</div>
<div class="num" style="left:647.2px;width:60px;top:395.00px;line-height:5.7px">280,446</div>
<div class="num" style="left:669.7px;width:60px;top:395.00px;line-height:5.7px">100.0</div>
<div style="left:398.2px;top:232.5px;width:0.6px;height:174px;background:#e2e2e2"></div>
<div style="left:442.7px;top:232.5px;width:0.6px;height:174px;background:#e2e2e2"></div>
<div style="left:487.2px;top:232.5px;width:0.6px;height:174px;background:#e2e2e2"></div>
<div style="left:531.7px;top:232.5px;width:0.6px;height:174px;background:#e2e2e2"></div>
<div style="left:575.3000000000001px;top:232.5px;width:0.6px;height:174px;background:#e2e2e2"></div>
<div style="left:619.7px;top:232.5px;width:0.6px;height:174px;background:#e2e2e2"></div>
<div style="left:664.1px;top:232.5px;width:0.6px;height:174px;background:#e2e2e2"></div>
<div style="left:708.2px;top:232.5px;width:0.6px;height:174px;background:#e2e2e2"></div>
<div style="left:16.2px;top:232.5px;width:0.6px;height:174px;background:#e2e2e2"></div>
<div style="left:5px;top:406.4px;width:726px;height:6px;background:#f6f6f6"></div>
<div style="left:5px;top:412.5px;width:726px;height:11px;background:linear-gradient(#fdf1e3,#fff8f0)"></div>
<div class="t" style="left:9px;top:415.8px;font-size:5.8px;line-height:7px;font-weight:bold;color:#c47a3e">Notas</div>
<div class="t" style="left:11.5px;top:424.40px;font-size:4.8px;line-height:5.4px;color:#222">- Los montos están en <b>Soles</b>.</div>
<div class="t" style="left:11.5px;top:429.90px;font-size:4.8px;line-height:5.4px;color:#222">- <b>La columna Avance %</b> representa la razón del Devengado entre el PIM, expresado en porcentajes.</div>
<div class="t" style="left:11.5px;top:435.40px;font-size:4.8px;line-height:5.4px;color:#222">- A partir del 2007 se comienza a incluir información de los <b>Gobiernos Locales</b>. <span style="position:static;color:#6a8acc">Ver más detalles.</span></div>
<div class="t" style="left:11.5px;top:440.90px;font-size:4.8px;line-height:5.4px;color:#222">- A partir del 2012 el concepto cambia de denominación por el de división funcional, y el subprograma por el de grupo funcional.</div>
<div style="left:4px;top:444.8px;width:738px;height:26.2px;background:#fff;border-top:0.8px solid #dadce0"></div>
<svg style="position:absolute;left:15px;top:453.5px" width="11" height="10"><rect x="3" y="0.5" width="7" height="9" fill="#f4f4f4" stroke="#c9c9c9" stroke-width="0.6"/><rect x="0.5" y="2" width="6" height="6" rx="0.8" fill="#d04a2c"/><text x="1.9" y="6.7" font-size="5" font-family="Liberation Sans" font-weight="bold" fill="#fff">P</text></svg>
<div class="t" style="left:31px;top:453.5px;font-size:6.3px;line-height:10px;color:#4a4a4a">PPT Seguimiento....pptx</div>
<svg style="position:absolute;left:113px;top:455.5px" width="7" height="5"><path d="M0.8 4L3.5 1.2L6.2 4" stroke="#5f6368" stroke-width="1" fill="none"/></svg>
<div style="left:128px;top:449px;width:0.8px;height:18px;background:#e3e3e3"></div>
<svg style="position:absolute;left:137px;top:453.5px" width="11" height="10"><rect x="3" y="0.5" width="7" height="9" fill="#f4f4f4" stroke="#c9c9c9" stroke-width="0.6"/><rect x="0.5" y="2" width="6" height="6" rx="0.8" fill="#d04a2c"/><text x="1.9" y="6.7" font-size="5" font-family="Liberation Sans" font-weight="bold" fill="#fff">P</text></svg>
<div class="t" style="left:153.5px;top:453.5px;font-size:6.3px;line-height:10px;color:#4a4a4a">PPT Seguimiento....pptx</div>
<svg style="position:absolute;left:235.5px;top:455.5px" width="7" height="5"><path d="M0.8 4L3.5 1.2L6.2 4" stroke="#5f6368" stroke-width="1" fill="none"/></svg>
<div style="left:251px;top:449px;width:0.8px;height:18px;background:#e3e3e3"></div>
<div style="left:665px;top:448.7px;width:56.5px;height:17px;border:0.8px solid #dadce0;border-radius:2px;background:#fff"></div>
<div class="t" style="left:673.8px;top:453px;font-size:7px;line-height:10px;color:#3c4043">Mostrar todo</div>
<svg style="position:absolute;left:727px;top:453.5px" width="8" height="8"><path d="M1 1L7 7M7 1L1 7" stroke="#5f6368" stroke-width="1"/></svg>
<svg style="position:absolute;left:755px;top:136px" width="118" height="66" viewBox="0 0 118 66"><defs><filter id="b1" x="-20%" y="-20%" width="140%" height="140%"><feGaussianBlur stdDeviation="1.4"/></filter></defs><g filter="url(#b1)">
<rect x="-5" y="-5" width="128" height="76" fill="#afafaf"/>
<rect x="-5" y="-5" width="45" height="76" fill="#b5b5b5"/>
<rect x="90" y="-5" width="35" height="76" fill="#a9a9a9"/>
<rect x="92" y="-5" width="5" height="76" fill="#b8b8b8"/>
<rect x="41" y="-5" width="48" height="70" fill="#cf3d2f"/>
<rect x="52" y="-5" width="21" height="27" fill="#e4dcd8"/>
<path d="M58 1h8v4h3v4h-14v-4h3z" fill="#b8453a"/>
<path d="M42 40C42 14 92 12 92 40L92 70H42Z" fill="#3c3431"/>
<ellipse cx="67" cy="52" rx="22" ry="26" fill="#9e8a7c"/>
<ellipse cx="44" cy="52" rx="4" ry="7" fill="#7e6656"/>
<ellipse cx="90" cy="52" rx="4" ry="7" fill="#7e6656"/>
<rect x="49" y="42" width="13" height="3" fill="#4a3a33"/><rect x="72" y="42" width="13" height="3" fill="#4a3a33"/>
<rect x="50" y="48" width="11" height="3" fill="#5a463c"/><rect x="73" y="48" width="11" height="3" fill="#5a463c"/>
</g></svg>
<div style="left:755px;top:187.4px;width:64px;height:14.599999999999994px;background:rgba(45,45,45,.78)"></div>
<div class="t" style="left:759px;top:187.4px;font-size:9.6px;line-height:14.6px;color:#ececec;letter-spacing:0px">Hugo Herrera</div>
<svg style="position:absolute;left:877px;top:136px" width="117" height="66" viewBox="0 0 117 66"><defs><filter id="b2" x="-20%" y="-20%" width="140%" height="140%"><feGaussianBlur stdDeviation="1.3"/></filter></defs><g filter="url(#b2)">
<rect x="-5" y="-5" width="127" height="76" fill="#e4e4e4"/>
<rect x="-5" y="-5" width="11" height="30" fill="#d83a38"/>
<rect x="15" y="-5" width="3" height="40" fill="#f2f2f2"/>
<rect x="82" y="-5" width="40" height="27" fill="#e2312c"/>
<circle cx="29" cy="31" r="11" fill="#dc6a62"/><circle cx="29" cy="31" r="11" fill="none" stroke="#f0d8d4" stroke-width="1.2" stroke-dasharray="1.5 2"/><circle cx="29" cy="31" r="6" fill="#ecdcd8"/><circle cx="29" cy="31" r="3" fill="#d08a80"/>
<circle cx="48" cy="25" r="9.5" fill="#dc6a62"/><circle cx="48" cy="25" r="9.5" fill="none" stroke="#f0d8d4" stroke-width="1.2" stroke-dasharray="1.5 2"/><circle cx="48" cy="25" r="5" fill="#ecdcd8"/><circle cx="48" cy="25" r="2.5" fill="#d08a80"/>
<path d="M22 42l5 18l6-18zM34 42l5 16l5-16z" fill="#de7a72"/>
<path d="M58 30C54 8 92 2 98 28C102 44 114 58 114 70H58Z" fill="#2c2220"/>
<path d="M56 28C56 10 90 6 92 26Z" fill="#cdbda2"/>
<ellipse cx="73" cy="32" rx="11.5" ry="15" fill="#c9a08c"/>
<path d="M48 70C52 54 96 52 112 70Z" fill="#b02a2c"/>
<ellipse cx="85" cy="44" rx="5" ry="9" fill="#c49a86"/>
</g></svg>
<div style="left:877px;top:187.4px;width:72px;height:14.599999999999994px;background:rgba(45,45,45,.78)"></div>
<svg style="position:absolute;left:880px;top:189.9px" width="9" height="10"><rect x="3" y="0.8" width="3.4" height="5.5" rx="1.7" fill="#e04848"/><path d="M1.6 4.6C1.6 7.6 7.8 7.6 7.8 4.6M4.7 7.3V9.3" stroke="#e04848" stroke-width="0.9" fill="none"/><path d="M0.8 9.2L8.4 0.8" stroke="#e04848" stroke-width="1"/></svg>
<div class="t" style="left:891px;top:187.4px;font-size:8.8px;line-height:14.6px;color:#ececec;letter-spacing:0px">MCLCP Piura</div>
<div style="left:752.2px;top:203px;width:124px;height:71.3px;background:linear-gradient(#e6ee86,#9ae04a 50%,#e6ee86);border-radius:1px"></div>
<svg style="position:absolute;left:755px;top:206px" width="118" height="65.3" viewBox="0 0 118 65.3"><defs><filter id="b3" x="-20%" y="-20%" width="140%" height="140%"><feGaussianBlur stdDeviation="1.2"/></filter></defs><g filter="url(#b3)">
<rect x="-5" y="-5" width="128" height="76" fill="#c8cec7"/>
<rect x="0" y="0" width="21" height="20" fill="#383a38"/><rect x="3" y="3" width="15" height="13" fill="#6a6f68"/>
<rect x="104" y="-3" width="16" height="25" fill="#4a4640"/><rect x="107" y="0" width="10" height="18" fill="#7a7a70"/>
<rect x="104" y="27" width="16" height="32" fill="#4a4640"/><rect x="107" y="30" width="10" height="26" fill="#6d6d64"/>
<path d="M51 26C48 0 92 0 89 26L87 40H54Z" fill="#a8a8a6"/>
<ellipse cx="70" cy="29" rx="15" ry="17" fill="#937d6d"/>
<rect x="59" y="24" width="9" height="2.5" fill="#5a4a40"/><rect x="73" y="24" width="9" height="2.5" fill="#5a4a40"/>
<path d="M36 68C36 47 46 40 60 40L82 40C96 40 104 50 104 68Z" fill="#652a31"/>
<path d="M58 40L70 66L83 40Z" fill="#d8d4cc"/>
<path d="M62 42L70 64L79 42Z" fill="#5d5550"/>
</g></svg>
<div style="left:755px;top:257.4px;width:78px;height:14.599999999999994px;background:rgba(45,45,45,.78)"></div>
<div class="t" style="left:759px;top:257.4px;font-size:9.3px;line-height:14.6px;color:#ececec;letter-spacing:0px">Federico Arnilla...</div>
<svg style="position:absolute;left:877px;top:206px" width="117" height="66" viewBox="0 0 117 66"><defs><filter id="b4" x="-20%" y="-20%" width="140%" height="140%"><feGaussianBlur stdDeviation="1.1"/></filter></defs><g filter="url(#b4)">
<rect x="-5" y="-5" width="127" height="76" fill="#d8d5cb"/>
<rect x="70" y="-5" width="52" height="76" fill="#dadad8"/>
<rect x="-5" y="-5" width="29" height="76" fill="#a83040"/>
<rect x="8" y="-5" width="4" height="76" fill="#c04656"/>
<rect x="18" y="-5" width="3" height="76" fill="#8e2636"/>
<path d="M34 40C30 16 46 10 56 10C68 10 78 18 76 40Z" fill="#2c2624"/>
<ellipse cx="56" cy="49" rx="21" ry="23" fill="#ccab98"/>
<ellipse cx="36" cy="47" rx="3" ry="5" fill="#b89888"/>
<path d="M36 26C44 20 66 20 76 28L76 32C66 26 46 26 36 32Z" fill="#2c2624"/>
<rect x="38" y="41" width="15" height="9" rx="3" fill="none" stroke="#3a3030" stroke-width="1.5"/>
<rect x="58" y="41" width="15" height="9" rx="3" fill="none" stroke="#3a3030" stroke-width="1.5"/>
<path d="M53 44H58" stroke="#3a3030" stroke-width="1.2"/>
</g></svg>
<div style="left:877px;top:257.4px;width:82px;height:14.599999999999994px;background:rgba(45,45,45,.78)"></div>
<svg style="position:absolute;left:880px;top:259.9px" width="9" height="10"><rect x="3" y="0.8" width="3.4" height="5.5" rx="1.7" fill="#e04848"/><path d="M1.6 4.6C1.6 7.6 7.8 7.6 7.8 4.6M4.7 7.3V9.3" stroke="#e04848" stroke-width="0.9" fill="none"/><path d="M0.8 9.2L8.4 0.8" stroke="#e04848" stroke-width="1"/></svg>
<div class="t" style="left:891px;top:257.4px;font-size:9.3px;line-height:14.6px;color:#ececec;letter-spacing:0px">Segundo Ob...</div>
<svg style="position:absolute;left:755px;top:276px" width="118" height="66" viewBox="0 0 118 66"><defs><filter id="b5" x="-20%" y="-20%" width="140%" height="140%"><feGaussianBlur stdDeviation="1.2"/></filter></defs><g filter="url(#b5)">
<rect x="-5" y="-5" width="128" height="76" fill="#d8d2ca"/>
<rect x="-5" y="-5" width="30" height="76" fill="#dedad4"/>
<rect x="80" y="-5" width="30" height="76" fill="#cfc9c2"/>
<rect x="22" y="-4" width="43" height="30" fill="#8a7870"/><rect x="24" y="-2" width="39" height="26" fill="#bfaaa4"/>
<rect x="109" y="-5" width="14" height="32" fill="#f4f4f4"/>
<rect x="-5" y="45" width="60" height="30" fill="#8a3030"/>
<rect x="95" y="48" width="30" height="25" fill="#6a2a2a"/>
<path d="M18 66L24 44L44 42L48 66Z" fill="#3a2c2c"/>
<path d="M51 36C48 10 98 8 95 36L93 48H53Z" fill="#8a8a8e"/>
<path d="M58 20C62 12 86 12 90 20Z" fill="#b4b0ae"/>
<ellipse cx="73" cy="42" rx="19" ry="22" fill="#c9b4a6"/>
<rect x="55" y="36" width="37" height="2.2" fill="#40393a"/>
<rect x="57" y="37" width="14" height="6.5" rx="2" fill="none" stroke="#40393a" stroke-width="1"/>
<rect x="75" y="37" width="14" height="6.5" rx="2" fill="none" stroke="#40393a" stroke-width="1"/>
<path d="M38 72C40 54 52 46 68 50C88 54 110 60 116 72Z" fill="#c9b396"/>
<ellipse cx="48" cy="52" rx="8" ry="7" fill="#d2bc9e"/>
</g></svg>
<div style="left:755px;top:328px;width:82px;height:14.599999999999994px;background:rgba(45,45,45,.78)"></div>
<svg style="position:absolute;left:758px;top:330.5px" width="9" height="10"><rect x="3" y="0.8" width="3.4" height="5.5" rx="1.7" fill="#e04848"/><path d="M1.6 4.6C1.6 7.6 7.8 7.6 7.8 4.6M4.7 7.3V9.3" stroke="#e04848" stroke-width="0.9" fill="none"/><path d="M0.8 9.2L8.4 0.8" stroke="#e04848" stroke-width="1"/></svg>
<div class="t" style="left:769px;top:328px;font-size:8.4px;line-height:14.6px;color:#ececec;letter-spacing:0.1px">VICTOR VICE...</div>
<div style="left:744.5px;top:256px;width:1.5px;height:34px;background:#7a7a7a"></div>
<div class="tile" style="left:877px;top:276px;width:117px;height:66px"></div>
<div class="t" style="left:877px;top:302px;width:117px;text-align:center;font-size:10.3px;line-height:14px;font-weight:bold;color:#f0f0f0">Rafael Silva</div>
<svg style="position:absolute;left:879px;top:330px" width="9" height="10"><rect x="3" y="0.8" width="3.4" height="5.5" rx="1.7" fill="#e04848"/><path d="M1.6 4.6C1.6 7.6 7.8 7.6 7.8 4.6M4.7 7.3V9.3" stroke="#e04848" stroke-width="0.9" fill="none"/><path d="M0.8 9.2L8.4 0.8" stroke="#e04848" stroke-width="1"/></svg>
<div class="tile" style="left:755px;top:346px;width:118px;height:66px"></div>
<svg style="position:absolute;left:785px;top:350px" width="58.5" height="59" viewBox="0 0 58.5 59">
<rect width="58.5" height="59" fill="#fbfbfb"/>
<path d="M3 3.5H19V39H3Z" fill="#2a7cc4"/>
<path d="M17 3.5H36V39H23C19 39 17 36 17 33Z" fill="#e0302e" stroke="#fff" stroke-width="1.3"/>
<path d="M33 3.5H54V36C54 38 53 39.5 51 39.5H40C35.5 39.5 33 37 33 33Z" fill="#f3c414" stroke="#fff" stroke-width="1.3"/>
<path d="M9 4V10C9 14 7 16 8 20C9 24 12 25 11 29C10 33 13 36 17 37" stroke="#fff" stroke-width="1.1" fill="none"/>
<path d="M24 4V11C24 15 22 17 23 21C24 24 27 25 26 29C25 33 28 36 33 37" stroke="#fff" stroke-width="1.1" fill="none"/>
<path d="M48 4V11C48 15 50 17 49 21C48 24 45 25 46 29C47 33 44 36 40 37" stroke="#fff" stroke-width="1.1" fill="none"/>
<circle cx="6" cy="17" r="1.1" fill="#fff"/><circle cx="21" cy="17" r="1.1" fill="#fff"/><circle cx="52" cy="17" r="1.1" fill="#fff"/>
<path d="M5 31C7 32 9 32 11 31M20 31C22 32 24 32 26 31M46 31C48 32 50 32 52 31" stroke="#fff" stroke-width="0.8" fill="none"/>
<text x="4" y="46" font-family="Liberation Sans" font-size="5" fill="#555">Mesa de Concertación</text>
<text x="20" y="51.5" font-family="Liberation Sans" font-size="3" fill="#777">para la Lucha contra la Pobreza</text>
<rect x="34" y="53" width="18" height="1.2" fill="#d03030"/><rect x="34" y="55.5" width="18" height="1" fill="#c04040"/>
</svg>
<div style="left:755px;top:398px;width:76px;height:14.599999999999994px;background:rgba(45,45,45,.78)"></div>
<svg style="position:absolute;left:758px;top:400.5px" width="9" height="10"><rect x="3" y="0.8" width="3.4" height="5.5" rx="1.7" fill="#e04848"/><path d="M1.6 4.6C1.6 7.6 7.8 7.6 7.8 4.6M4.7 7.3V9.3" stroke="#e04848" stroke-width="0.9" fill="none"/><path d="M0.8 9.2L8.4 0.8" stroke="#e04848" stroke-width="1"/></svg>
<div class="t" style="left:769px;top:398px;font-size:8.8px;line-height:14.6px;color:#ececec;letter-spacing:0px">MCLCP Piura</div>
<div class="tile" style="left:877px;top:346px;width:117px;height:66px"></div>
<div class="t" style="left:877px;top:373px;width:117px;text-align:center;font-size:10.6px;line-height:14px;font-weight:bold;color:#f0f0f0">Teresa &nbsp;Albirena...</div>
<svg style="position:absolute;left:29px;top:496px" width="20" height="19"><rect x="9" y="1.5" width="6" height="10" rx="3" fill="#c3c3c3"/><path d="M6 8C6 13.5 18 13.5 18 8M12 13V16.5M8.5 17H15.5" stroke="#c3c3c3" stroke-width="1.4" fill="none"/><path d="M2 18L19 1" stroke="#d33a3a" stroke-width="1.4"/></svg>
<div class="t" style="left:-21.200000000000003px;top:516.5px;width:120px;text-align:center;font-size:8.7px;line-height:12px;color:#c9c9c9;-webkit-text-stroke:0.2px #c9c9c9">Re-Iniciar Audio</div>
<svg style="position:absolute;left:64px;top:502.5px" width="8" height="5"><path d="M1 4L4 1L7 4" stroke="#bbb" stroke-width="1.1" fill="none"/></svg>
<svg style="position:absolute;left:102px;top:499px" width="20" height="13"><rect x="0.5" y="0.5" width="12" height="11.5" rx="2" fill="#c8c8c8"/><path d="M13.5 4.5L19 1.5V11L13.5 8Z" fill="#c8c8c8"/></svg>
<div class="t" style="left:52px;top:516.5px;width:120px;text-align:center;font-size:8.8px;line-height:12px;color:#c9c9c9;-webkit-text-stroke:0.2px #c9c9c9">Detener video</div>
<svg style="position:absolute;left:135px;top:502.5px" width="8" height="5"><path d="M1 4L4 1L7 4" stroke="#bbb" stroke-width="1.1" fill="none"/></svg>
<svg style="position:absolute;left:312px;top:498px" width="15" height="16"><defs><clipPath id="shc"><path d="M7.2 2.3L12.6 3.8V7.6C12.6 10.4 10.3 12.6 7.2 13.6C4.1 12.6 1.8 10.4 1.8 7.6V3.8Z"/></clipPath></defs><path d="M7.2 0.6L14 2.6V7.6C14 11.2 11.2 14 7.2 15.2C3.2 14 0.4 11.2 0.4 7.6V2.6Z" fill="#d0d0d0"/><g clip-path="url(#shc)"><rect x="7.2" y="1" width="7" height="7.3" fill="#1d1d1d"/><rect x="0" y="8.3" width="7.2" height="7" fill="#1d1d1d"/></g></svg>
<div class="t" style="left:259px;top:516.5px;width:120px;text-align:center;font-size:8.6px;line-height:12px;color:#c9c9c9;-webkit-text-stroke:0.2px #c9c9c9">Seguridad</div>
<svg style="position:absolute;left:372px;top:499.5px" width="19" height="13"><circle cx="13.3" cy="3.8" r="2.6" fill="#cdcdcd"/><path d="M9.5 12.6V10C9.5 8 11 7.2 13.3 7.2C15.8 7.2 17.5 8.3 17.5 10.4V12.6Z" fill="#cdcdcd"/><circle cx="5.8" cy="3.3" r="3" fill="#cdcdcd" stroke="#1a1a1a" stroke-width="0.6"/><path d="M0.5 12.6V10.2C0.5 7.8 2.5 7 5.8 7C9 7 11 7.8 11 10.2V12.6Z" fill="#cdcdcd" stroke="#1a1a1a" stroke-width="0.6"/></svg>
<div class="t" style="left:391.5px;top:498.8px;font-size:8.5px;line-height:11px;color:#cfcfcf">8</div>
<div class="t" style="left:321.6px;top:516.5px;width:120px;text-align:center;font-size:8.5px;line-height:12px;color:#c9c9c9;-webkit-text-stroke:0.2px #c9c9c9">Participantes</div>
<svg style="position:absolute;left:436px;top:498.5px" width="15" height="14"><rect x="0.5" y="6" width="3.5" height="7.5" fill="#cbcbcb"/><rect x="5.5" y="0.5" width="3.5" height="13" fill="#cbcbcb"/><rect x="10.5" y="4" width="3.5" height="9.5" fill="#cbcbcb"/></svg>
<div class="t" style="left:383.5px;top:516.5px;width:120px;text-align:center;font-size:8.6px;line-height:12px;color:#c9c9c9;-webkit-text-stroke:0.2px #c9c9c9">Votaciones</div>
<svg style="position:absolute;left:494px;top:499.5px" width="15" height="14"><path d="M3.5 1.2H11C12.6 1.2 13.8 2.4 13.8 4V7C13.8 8.6 12.6 9.8 11 9.8H6.5L3 12.8V9.8C1.8 9.6 0.8 8.5 0.8 7V4C0.8 2.4 2 1.2 3.5 1.2Z" fill="#cbcbcb"/></svg>
<div style="left:505px;top:495px;width:10px;height:10px;border-radius:50%;background:#e5322d"></div>
<div class="t" style="left:505px;top:495px;width:10px;text-align:center;font-size:6.5px;line-height:10px;font-weight:bold;color:#fff">1</div>
<div class="t" style="left:442.2px;top:516.5px;width:120px;text-align:center;font-size:8.3px;line-height:12px;color:#c9c9c9;-webkit-text-stroke:0.2px #c9c9c9">Chatear</div>
<div style="left:564.6px;top:500px;width:17.4px;height:12px;border-radius:2px;background:#2bc957"></div>
<svg style="position:absolute;left:569.3px;top:502px" width="8" height="8"><path d="M4 7V1.5M1.5 4L4 1.3L6.5 4" stroke="#0c3a18" stroke-width="1.2" fill="none"/></svg>
<div class="t" style="left:513px;top:516.5px;width:120px;text-align:center;font-size:8.8px;line-height:12px;color:#3ccf67;-webkit-text-stroke:0.2px #3ccf67">Compartir pantalla</div>
<svg style="position:absolute;left:602px;top:503.5px" width="8" height="5"><path d="M1 4L4 1L7 4" stroke="#bbb" stroke-width="1.1" fill="none"/></svg>
<div style="left:654.3px;top:497.3px;width:15.6px;height:14px;border-radius:2px;background:#c6c6c6"></div>
<div style="left:658.6px;top:501.3px;width:2.3px;height:6px;background:#222"></div><div style="left:663.2px;top:501.3px;width:2.3px;height:6px;background:#222"></div>
<div style="left:672.5px;top:497.3px;width:15px;height:14px;border-radius:2px;background:#c6c6c6"></div>
<div style="left:677.3px;top:501.6px;width:5.5px;height:5.5px;background:#222"></div>
<div class="t" style="left:610.6px;top:516.5px;width:120px;text-align:center;font-size:8.6px;line-height:12px;color:#c9c9c9;-webkit-text-stroke:0.2px #c9c9c9">Pausar/detener grabación</div>
<svg style="position:absolute;left:747px;top:497px" width="17" height="16"><circle cx="7.5" cy="9" r="6" fill="#cacaca"/><circle cx="5.5" cy="7.8" r="0.9" fill="#222"/><circle cx="9.5" cy="7.8" r="0.9" fill="#222"/><path d="M4.8 10.3C6 12.3 9 12.3 10.2 10.3" stroke="#222" stroke-width="0.9" fill="none"/><path d="M13.5 1V5M11.5 3H15.5" stroke="#cacaca" stroke-width="1.1"/></svg>
<div class="t" style="left:695px;top:516.5px;width:120px;text-align:center;font-size:8.2px;line-height:12px;color:#c9c9c9;-webkit-text-stroke:0.2px #c9c9c9">Reacciones</div>
<div style="left:946.4px;top:502.8px;width:44.8px;height:20px;border-radius:3px;background:#c9232b"></div>
<div class="t" style="left:946.4px;top:502.8px;width:44.8px;text-align:center;font-size:8.1px;line-height:20px;font-weight:bold;color:#fff">Salir</div>
</body></html>
